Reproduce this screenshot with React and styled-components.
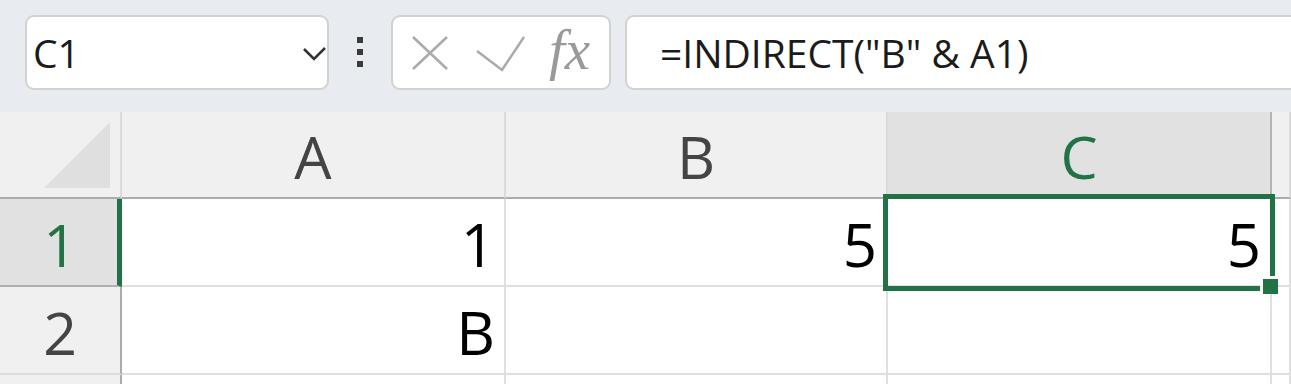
import React from "react"
import styled, { createGlobalStyle } from "styled-components"

const GlobalStyle = createGlobalStyle`
    body {
        margin: 0;
        font-family: "Open Sans", "Noto Sans", sans-serif;
        background: #ffffff;
        overflow: hidden;
    }
`

const UI_FONT = `"Open Sans", "Noto Sans", sans-serif`
const GREEN = "#217346"

export default function App() {
    return (
        <Page>
            <GlobalStyle />
            <Toolbar>
                <NameBox>
                    <NameText>C1</NameText>
                    <Chevron width="26" height="16" viewBox="0 0 26 16">
                        <path d="M2 3 L12 13 L23 2" fill="none" stroke="#333" strokeWidth="2.6" />
                    </Chevron>
                </NameBox>
                <Dots>
                    <Dot />
                    <Dot />
                    <Dot />
                </Dots>
                <FormulaButtons>
                    <svg width="38" height="36" viewBox="0 0 38 36">
                        <path d="M2 2 L36 34 M36 2 L2 34" stroke="#ababab" strokeWidth="2.6" fill="none" />
                    </svg>
                    <CheckIcon width="50" height="38" viewBox="0 0 50 38">
                        <path d="M1 16 L26 35 L48 2" stroke="#ababab" strokeWidth="2.6" fill="none" />
                    </CheckIcon>
                    <Fx>fx</Fx>
                </FormulaButtons>
                <FormulaBar>
                    <FormulaText>=INDIRECT("B" &amp; A1)</FormulaText>
                </FormulaBar>
            </Toolbar>

            <Grid>
                <Corner>
                    <svg width="67" height="67" viewBox="0 0 67 67">
                        <polygon points="66,0 66,66 0,66" fill="#dfdfdf" />
                    </svg>
                </Corner>
                <ColHeader>A</ColHeader>
                <ColHeader>B</ColHeader>
                <ColHeader $selected>C</ColHeader>
                <ColHeader />

                <RowHeader $selected>1</RowHeader>
                <Cell>1</Cell>
                <Cell>5</Cell>
                <Cell $active>
                    5
                    <Selection>
                        <Handle />
                    </Selection>
                </Cell>
                <Cell />

                <RowHeader>2</RowHeader>
                <Cell>B</Cell>
                <Cell />
                <Cell />
                <Cell />

                <RowHeader />
                <Cell />
                <Cell />
                <Cell />
                <Cell />
            </Grid>
        </Page>
    )
}

const Page = styled.div`
    width: 1291px;
    height: 384px;
    overflow: hidden;
`

const Toolbar = styled.div`
    height: 112px;
    background-color: #e8ebef;
    display: flex;
    align-items: flex-start;
    padding: 15px 0 0 25px;
    box-sizing: border-box;
    overflow: hidden;
`

const Box = styled.div`
    height: 75px;
    box-sizing: border-box;
    border: 2px solid #d2d2d2;
    border-radius: 9px;
    background-color: white;
    display: flex;
    align-items: center;
`

const NameBox = styled(Box)`
    width: 304px;
    padding-left: 6px;
    padding-right: 0;
    justify-content: space-between;
`

const NameText = styled.span`
    font-family: ${UI_FONT};
    font-size: 39px;
    color: #1b1b1b;
`

const Chevron = styled.svg`
    margin-right: -1px;
    margin-top: 2px;
`

const Dots = styled.div`
    display: flex;
    flex-direction: column;
    gap: 6px;
    margin: 22px 28px 0 28px;
`

const Dot = styled.div`
    width: 6px;
    height: 6px;
    background-color: #3a3a3a;
`

const FormulaButtons = styled(Box)`
    width: 220px;
    padding-left: 18px;
    gap: 0;
`

const CheckIcon = styled.svg`
    margin-left: 27px;
    margin-top: 2px;
`

const Fx = styled.span`
    font-family: "Liberation Serif", "DejaVu Serif", serif;
    font-style: italic;
    font-size: 57px;
    color: #9a9a9a;
    margin-left: 23px;
    margin-top: -6px;
`

const FormulaBar = styled(Box)`
    flex: 1;
    margin-left: 14px;
    margin-right: -20px;
    padding-left: 33px;
`

const FormulaText = styled.span`
    font-family: ${UI_FONT};
    font-size: 39px;
    color: #1b1b1b;
    white-space: pre;
`

const Grid = styled.div`
    display: grid;
    grid-template-columns: 122px 384px 382px 384px 1fr;
    grid-template-rows: 87px 88px 88px 88px;
    font-family: ${UI_FONT};
`

const Corner = styled.div`
    background-color: #f0f0f0;
    border-right: 2px solid #dadada;
    border-bottom: 2px solid #ababab;
    box-sizing: border-box;
    display: flex;
    align-items: flex-start;
    justify-content: flex-end;
    padding: 10px 9px 0 0;
`

const ColHeader = styled.div`
    background-color: ${props => props.$selected ? "#e1e1e1" : "#f0f0f0"};
    color: ${props => props.$selected ? GREEN : "#444444"};
    border-right: 2px solid ${props => props.$selected ? "#b4b4b4" : "#dadada"};
    border-bottom: 2px solid #ababab;
    box-sizing: border-box;
    display: flex;
    align-items: center;
    justify-content: center;
    font-size: 59px;
    padding-top: 2px;
`

const RowHeader = styled.div`
    background-color: ${props => props.$selected ? "#e1e1e1" : "#f0f0f0"};
    color: ${props => props.$selected ? GREEN : "#444444"};
    border-right: ${props => props.$selected ? `5px solid ${GREEN}` : "2px solid #ababab"};
    border-bottom: 2px solid ${props => props.$selected ? "#b0b0b0" : "#dddddd"};
    box-sizing: border-box;
    display: flex;
    align-items: center;
    justify-content: center;
    font-size: 59px;
    padding-left: ${props => props.$selected ? "3px" : "0"};
    padding-top: 4px;
`

const Cell = styled.div`
    position: relative;
    z-index: ${props => props.$active ? 2 : "auto"};
    background-color: white;
    border-right: 2px solid #e0e0e0;
    border-bottom: 2px solid #e0e0e0;
    box-sizing: border-box;
    display: flex;
    align-items: center;
    justify-content: flex-end;
    padding: 4px 9px 0 0;
    font-size: 60px;
    color: #000000;
`

const Selection = styled.div`
    position: absolute;
    left: -5px;
    top: -5px;
    width: 392px;
    height: 97px;
    box-sizing: border-box;
    border: 5px solid ${GREEN};
    pointer-events: none;
`

const Handle = styled.div`
    position: absolute;
    left: 372px;
    top: 77px;
    width: 15px;
    height: 15px;
    background-color: ${GREEN};
    border-left: 3px solid white;
    border-top: 3px solid white;
`
